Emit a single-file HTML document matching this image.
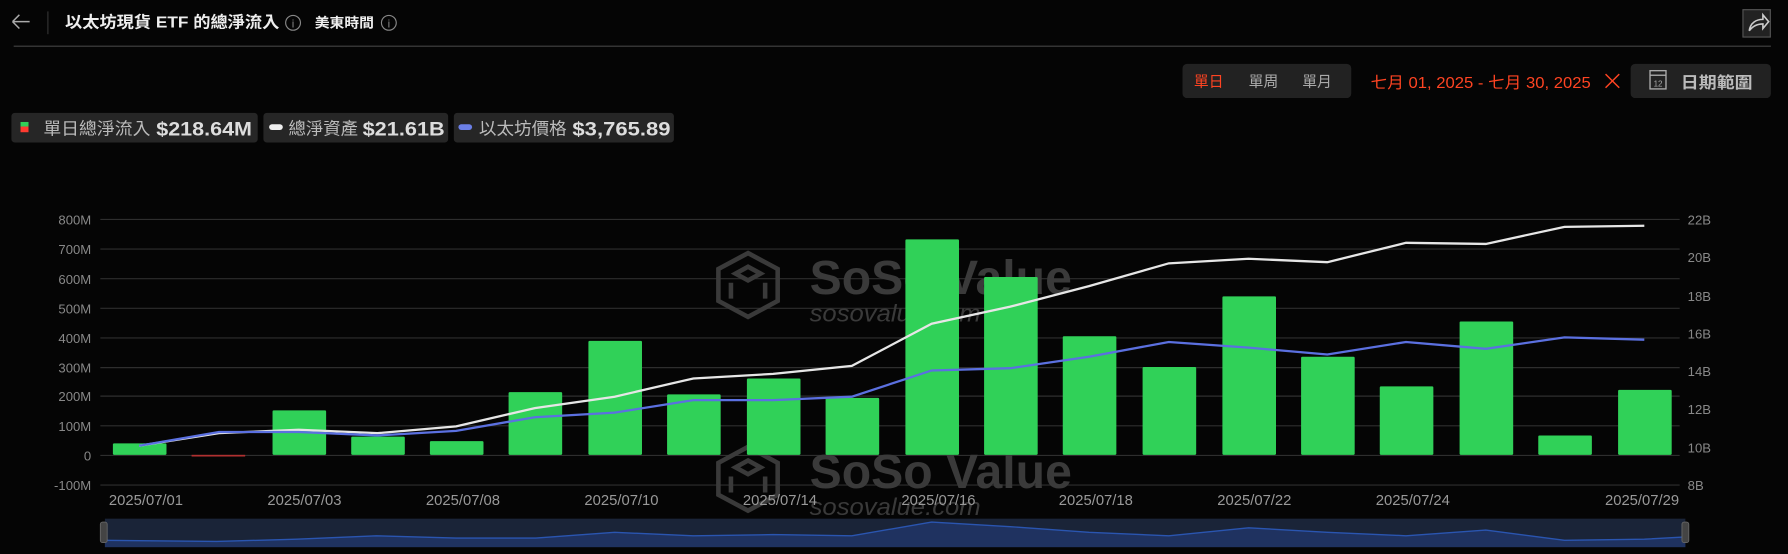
<!DOCTYPE html>
<html><head><meta charset="utf-8"><style>
html,body{margin:0;padding:0;background:#050505;}
svg{display:block;}
text{font-family:"Liberation Sans","Noto Sans CJK TC",sans-serif;}
</style></head><body>
<svg width="1788" height="554" viewBox="0 0 1568 486" preserveAspectRatio="none" xmlns="http://www.w3.org/2000/svg">
<rect width="1568" height="486" fill="#050505"/>
<path d="M11 19 H26 M11 19 L17 13 M11 19 L17 25" stroke="#aaa" stroke-width="1.3" fill="none"/>
<line x1="42" y1="10" x2="42" y2="30" stroke="#333"/>
<text x="57" y="24" fill="#eee" font-size="14" font-weight="bold" textLength="188" lengthAdjust="spacingAndGlyphs">以太坊現貨 ETF 的總淨流入</text>
<circle cx="257" cy="20" r="6.5" fill="none" stroke="#888" stroke-width="1"/><text x="257" y="24" fill="#888" font-size="10" text-anchor="middle">i</text>
<text x="276" y="24" fill="#eee" font-size="12" font-weight="bold" textLength="52" lengthAdjust="spacingAndGlyphs">美東時間</text>
<circle cx="341" cy="20" r="6.5" fill="none" stroke="#888" stroke-width="1"/><text x="341" y="24" fill="#888" font-size="10" text-anchor="middle">i</text>
<rect x="1528.5" y="8.5" width="24" height="24" fill="#222" stroke="#555"/>
<path d="M1534 27 C1535 20 1540 17 1546 17 L1546 13 L1551 19 L1546 25 L1546 21 C1541 21 1537 23 1534 27 Z" fill="none" stroke="#ccc" stroke-width="1.4"/>
<line x1="12" y1="40.5" x2="1553" y2="40.5" stroke="#444"/>
<rect x="1037" y="56" width="148" height="30" rx="4" fill="#222"/>
<text x="1047" y="76" fill="#ff4422" font-size="13">單日</text>
<text x="1095" y="76" fill="#aaa" font-size="13">單周</text>
<text x="1142" y="76" fill="#aaa" font-size="13">單月</text>
<text x="1202" y="77" fill="#ff4422" font-size="14" textLength="193" lengthAdjust="spacingAndGlyphs">七月 01, 2025 - 七月 30, 2025</text>
<path d="M1408 65 L1420 77 M1420 65 L1408 77" stroke="#ff4422" stroke-width="1.3"/>
<rect x="1430" y="56" width="123" height="30" rx="4" fill="#222"/>
<rect x="1447" y="62" width="14" height="16" fill="none" stroke="#aaa" stroke-width="1.2"/>
<line x1="1447" y1="66" x2="1461" y2="66" stroke="#aaa" stroke-width="1.2"/>
<text x="1454" y="76" fill="#aaa" font-size="7" text-anchor="middle">12</text>
<text x="1474" y="77" fill="#bbb" font-size="14" font-weight="bold" textLength="63" lengthAdjust="spacingAndGlyphs">日期範圍</text>
<rect x="10" y="99" width="216" height="26" rx="3" fill="#262626"/>
<rect x="18" y="107" width="7" height="4" fill="#30d158"/><rect x="18" y="111" width="7" height="5" fill="#ff3b30"/>
<text x="38" y="118" fill="#bbb" font-size="15" textLength="94" lengthAdjust="spacingAndGlyphs">單日總淨流入</text>
<text x="137" y="119" fill="#ddd" font-size="17" font-weight="bold" textLength="84" lengthAdjust="spacingAndGlyphs">$218.64M</text>
<rect x="231" y="99" width="162" height="26" rx="3" fill="#262626"/>
<rect x="236" y="109" width="12" height="5" rx="2.5" fill="#eee"/>
<text x="253" y="118" fill="#bbb" font-size="15" textLength="61" lengthAdjust="spacingAndGlyphs">總淨資產</text>
<text x="318" y="119" fill="#ddd" font-size="17" font-weight="bold" textLength="72" lengthAdjust="spacingAndGlyphs">$21.61B</text>
<rect x="398" y="99" width="193" height="26" rx="3" fill="#262626"/>
<rect x="402" y="109" width="12" height="5" rx="2.5" fill="#6b7fe6"/>
<text x="420" y="118" fill="#bbb" font-size="15" textLength="77" lengthAdjust="spacingAndGlyphs">以太坊價格</text>
<text x="502" y="119" fill="#ddd" font-size="17" font-weight="bold" textLength="86" lengthAdjust="spacingAndGlyphs">$3,765.89</text>
<g stroke="#2e2e2e" stroke-width="1">
<line x1="88" y1="192.5" x2="1473" y2="192.5"/><line x1="88" y1="218.5" x2="1473" y2="218.5"/>
<line x1="88" y1="244.5" x2="1473" y2="244.5"/><line x1="88" y1="270.5" x2="1473" y2="270.5"/>
<line x1="88" y1="296.5" x2="1473" y2="296.5"/><line x1="88" y1="322.5" x2="1473" y2="322.5"/>
<line x1="88" y1="347.5" x2="1473" y2="347.5"/><line x1="88" y1="373.5" x2="1473" y2="373.5"/>
<line x1="88" y1="399.5" x2="1473" y2="399.5"/><line x1="88" y1="425.5" x2="1473" y2="425.5"/>
</g>
<g fill="#888" font-size="11.5" text-anchor="end">
<text x="80" y="197">800M</text><text x="80" y="223">700M</text><text x="80" y="249">600M</text>
<text x="80" y="275">500M</text><text x="80" y="301">400M</text><text x="80" y="327">300M</text>
<text x="80" y="352">200M</text><text x="80" y="378">100M</text><text x="80" y="404">0</text>
<text x="80" y="430">-100M</text>
</g>
<g fill="#888" font-size="11.5">
<text x="1480" y="197">22B</text><text x="1480" y="230">20B</text><text x="1480" y="264">18B</text>
<text x="1480" y="297">16B</text><text x="1480" y="330">14B</text><text x="1480" y="363">12B</text>
<text x="1480" y="397">10B</text><text x="1480" y="430">8B</text>
</g>
<g fill="none" stroke="#3a3a3a" stroke-width="4">
<polygon points="656,222 682,236 682,264 656,278 630,264 630,236"/>
<path d="M645 240 L656 234 L667 240 L656 246 Z M641 248 V262 M671 248 V262"/>
<polygon points="656,392 682,406 682,434 656,448 630,434 630,406"/>
<path d="M645 410 L656 404 L667 410 L656 416 Z M641 418 V432 M671 418 V432"/>
</g>
<g fill="#3a3a3a">
<text x="710" y="258" font-size="42" font-weight="bold" textLength="230" lengthAdjust="spacingAndGlyphs">SoSo Value</text>
<text x="710" y="282" font-size="21" font-style="italic" textLength="150" lengthAdjust="spacingAndGlyphs">sosovalue.com</text>
<text x="710" y="428" font-size="42" font-weight="bold" textLength="230" lengthAdjust="spacingAndGlyphs">SoSo Value</text>
<text x="710" y="452" font-size="21" font-style="italic" textLength="150" lengthAdjust="spacingAndGlyphs">sosovalue.com</text>
</g>
<g fill="#30d158">
<rect x="99" y="389" width="47" height="10" rx="1"/>
<rect x="239" y="360" width="47" height="39" rx="1"/>
<rect x="308" y="383" width="47" height="16" rx="1"/>
<rect x="377" y="387" width="47" height="12" rx="1"/>
<rect x="446" y="344" width="47" height="55" rx="1"/>
<rect x="516" y="299" width="47" height="100" rx="1"/>
<rect x="585" y="346" width="47" height="53" rx="1"/>
<rect x="655" y="332" width="47" height="67" rx="1"/>
<rect x="724" y="349" width="47" height="50" rx="1"/>
<rect x="794" y="210" width="47" height="189" rx="1"/>
<rect x="863" y="243" width="47" height="156" rx="1"/>
<rect x="932" y="295" width="47" height="104" rx="1"/>
<rect x="1002" y="322" width="47" height="77" rx="1"/>
<rect x="1072" y="260" width="47" height="139" rx="1"/>
<rect x="1141" y="313" width="47" height="86" rx="1"/>
<rect x="1210" y="339" width="47" height="60" rx="1"/>
<rect x="1280" y="282" width="47" height="117" rx="1"/>
<rect x="1349" y="382" width="47" height="17" rx="1"/>
<rect x="1419" y="342" width="47" height="57" rx="1"/>
</g>
<rect x="168" y="399" width="47" height="1.5" fill="#b03030"/>
<polyline fill="none" stroke="#e6e6e6" stroke-width="2" points="122,391 192,380 262,377 331,380 400,374 469,358 539,348 608,332 678,328 747,321 817,284 886,269 955,251 1025,231 1095,227 1164,230 1233,213 1303,214 1372,199 1442,198"/>
<polyline fill="none" stroke="#5b70e0" stroke-width="2" points="122,391 192,379 262,379 331,382 400,378 469,366 539,362 608,351 678,351 747,348 817,325 886,323 955,313 1025,300 1095,305 1164,311 1233,300 1303,306 1372,296 1442,298"/>
<g fill="#999" font-size="13" text-anchor="middle">
<text x="128" y="443">2025/07/01</text><text x="267" y="443">2025/07/03</text>
<text x="406" y="443">2025/07/08</text><text x="545" y="443">2025/07/10</text>
<text x="684" y="443">2025/07/14</text><text x="823" y="443">2025/07/16</text>
<text x="961" y="443">2025/07/18</text><text x="1100" y="443">2025/07/22</text>
<text x="1239" y="443">2025/07/24</text><text x="1440" y="443">2025/07/29</text>
</g>
<rect x="92" y="455" width="1386" height="25" fill="#1a2438"/>
<path d="M92 474 L190 475 L260 473 L330 470 L400 472 L470 472 L539 467 L608 470 L678 469 L747 470 L817 458 L886 462 L955 467 L1025 470 L1095 463 L1164 467 L1233 470 L1303 465 L1372 474 L1442 473 L1478 471 L1478 480 L92 480 Z" fill="#1f3260"/>
<polyline fill="none" stroke="#2a55b0" stroke-width="1.2" points="92,474 190,475 260,473 330,470 400,472 470,472 539,467 608,470 678,469 747,470 817,458 886,462 955,467 1025,470 1095,463 1164,467 1233,470 1303,465 1372,474 1442,473 1478,471"/>
<rect x="88" y="458" width="6" height="18" rx="2" fill="#444" stroke="#666" stroke-width="0.8"/>
<rect x="1475" y="458" width="6" height="18" rx="2" fill="#444" stroke="#666" stroke-width="0.8"/>
</svg>
</body></html>
